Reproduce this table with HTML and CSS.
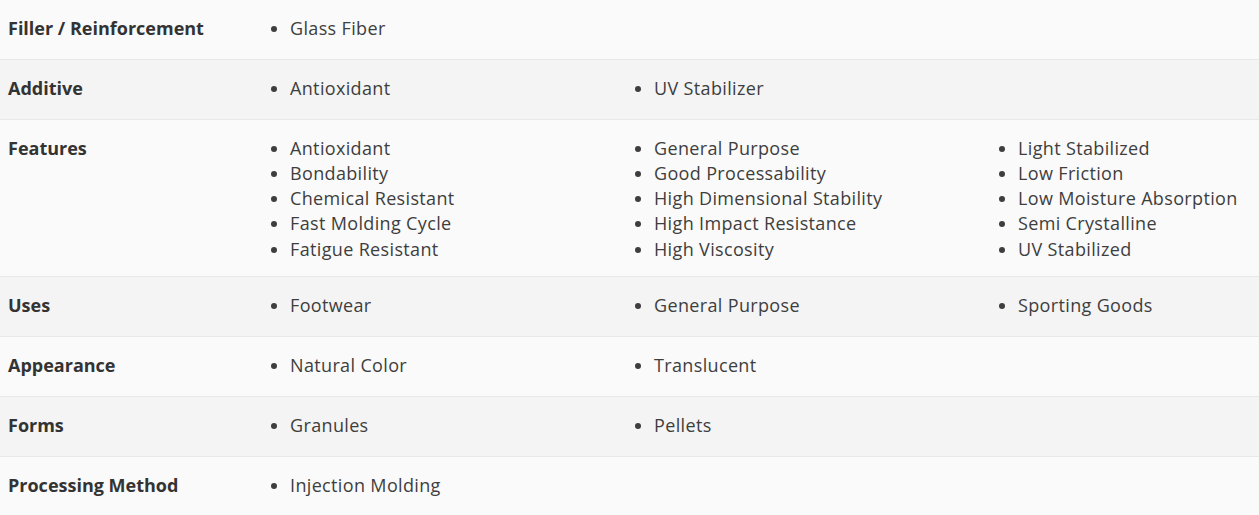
FILE: index.html
```html
<!DOCTYPE html>
<html lang="en">
<head>
<meta charset="utf-8">
<title>Properties</title>
<link rel="stylesheet" href="styles.css">
</head>
<body>
<div class="props">
  <div class="row odd">
    <div class="label">Filler / Reinforcement</div>
    <ul class="values"><li>Glass Fiber</li></ul>
  </div>
  <div class="row even">
    <div class="label">Additive</div>
    <ul class="values"><li>Antioxidant</li><li>UV Stabilizer</li></ul>
  </div>
  <div class="row odd">
    <div class="label">Features</div>
    <ul class="values">
      <li>Antioxidant</li><li>Bondability</li><li>Chemical Resistant</li><li>Fast Molding Cycle</li><li>Fatigue Resistant</li>
      <li>General Purpose</li><li>Good Processability</li><li>High Dimensional Stability</li><li>High Impact Resistance</li><li>High Viscosity</li>
      <li>Light Stabilized</li><li>Low Friction</li><li>Low Moisture Absorption</li><li>Semi Crystalline</li><li>UV Stabilized</li>
    </ul>
  </div>
  <div class="row even">
    <div class="label">Uses</div>
    <ul class="values"><li>Footwear</li><li>General Purpose</li><li>Sporting Goods</li></ul>
  </div>
  <div class="row odd">
    <div class="label">Appearance</div>
    <ul class="values"><li>Natural Color</li><li>Translucent</li></ul>
  </div>
  <div class="row even">
    <div class="label">Forms</div>
    <ul class="values"><li>Granules</li><li>Pellets</li></ul>
  </div>
  <div class="row odd">
    <div class="label">Processing Method</div>
    <ul class="values"><li>Injection Molding</li></ul>
  </div>
</div>
</body>
</html>
```
FILE: styles.css
```css
html, body {
  margin: 0;
  padding: 0;
  background: #fafafa;
  overflow: hidden;
}
body {
  font-family: "Open Sans", "DejaVu Sans", sans-serif;
  font-size: 18px;
  color: #3e3e3e;
}
.props {
  width: 1259px;
  overflow: hidden;
}
.row {
  display: flex;
  align-items: flex-start;
  min-height: 59.7px;
  box-sizing: border-box;
  padding: 16px 0 14.5px 8px;
  border-top: 1px solid #e8e8e8;
  line-height: 25.25px;
}
.row:first-child {
  border-top: none;
  min-height: 59px;
}
.odd { background: #fafafa; }
.even { background: #f4f4f4; }
.label {
  width: 242px;
  flex: none;
  font-weight: 700;
  color: #333;
}
.values {
  margin: 0;
  padding: 0 0 0 40px;
  width: 1092px;
  flex: none;
  columns: 3;
  column-gap: 0;
  list-style: disc;
  letter-spacing: 0.35px;
}
.values li {
  break-inside: avoid;
}
```
